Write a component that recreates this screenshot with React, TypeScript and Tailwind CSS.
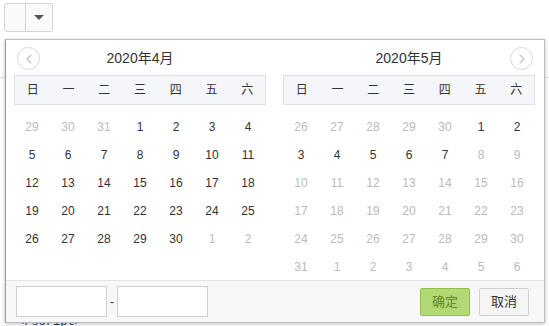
import { ChevronLeft, ChevronRight } from 'lucide-react'

const weekDays = ['日', '一', '二', '三', '四', '五', '六']

type Day = { n: number; muted: boolean }

const april: Day[] = [
  ...[29, 30, 31].map((n) => ({ n, muted: true })),
  ...Array.from({ length: 30 }, (_, i) => ({ n: i + 1, muted: false })),
  ...[1, 2].map((n) => ({ n, muted: true })),
]

const may: Day[] = [
  ...[26, 27, 28, 29, 30].map((n) => ({ n, muted: true })),
  ...Array.from({ length: 31 }, (_, i) => ({ n: i + 1, muted: i > 6 })),
  ...[1, 2, 3, 4, 5, 6].map((n) => ({ n, muted: true })),
]

function NavButton({ dir }: { dir: 'prev' | 'next' }) {
  const Icon = dir === 'prev' ? ChevronLeft : ChevronRight
  return (
    <button className="flex h-[23px] w-[23px] items-center justify-center rounded-full border border-[#d9d9d9] bg-white text-[#c4c4c4]">
      <Icon size={16} strokeWidth={1.75} />
    </button>
  )
}

function Month({ title, days, nav }: { title: string; days: Day[]; nav: 'prev' | 'next' }) {
  return (
    <div className="flex w-[252px] flex-col">
      <div className="relative flex h-[35px] items-center justify-center">
        <div className={nav === 'prev' ? 'absolute left-[3px] top-[7px]' : 'absolute right-[2px] top-[7px]'}>
          <NavButton dir={nav} />
        </div>
        <span className="pt-[2px] text-[14px] text-[#333]">{title}</span>
      </div>
      <div className="grid h-[30px] grid-cols-7 items-center border border-[#dfe1e4] bg-[#f4f6f9]">
        {weekDays.map((w) => (
          <span key={w} className="text-center text-[12px] text-[#333]">
            {w}
          </span>
        ))}
      </div>
      <div className="mt-[8px] grid grid-cols-7">
        {days.map((d, i) => (
          <span
            key={i}
            className={
              'flex h-[28px] items-center justify-center text-[12px] ' +
              (d.muted ? 'text-[#bbbbbb]' : 'text-[#333]')
            }
          >
            {d.n}
          </span>
        ))}
      </div>
    </div>
  )
}

export default function App() {
  return (
    <div
      className="relative h-[326px] w-[549px] overflow-hidden bg-white"
      style={{ fontFamily: '"Liberation Sans", "Noto Sans CJK SC", sans-serif' }}
    >
      <div className="ml-[4px] mt-[3px] flex h-[29px] w-[49px] rounded-[3px] border border-[#d4d4d4] bg-[#fafafa]">
        <div className="w-[21px] border-r border-[#d4d4d4]" />
        <div className="flex flex-1 items-center justify-center">
          <span className="h-0 w-0 border-x-[5px] border-t-[5px] border-x-transparent border-t-[#555]" />
        </div>
      </div>
      <div className="mt-[45px] h-px w-full bg-[#e2e2e2]" />
      <div className="absolute left-[17px] top-[313px] font-['Liberation_Mono'] text-[12px] text-[#1c3f78]">
        &lt;/script&gt;
      </div>

      <div className="absolute left-[5px] top-[39px] flex w-[540px] flex-col border border-[#bdbdbd] border-l-[#999] bg-white shadow-[0_1px_4px_rgba(0,0,0,0.25)]">
        <div className="flex gap-[17px] pl-[8px]">
          <Month title="2020年4月" days={april} nav="prev" />
          <Month title="2020年5月" days={may} nav="next" />
        </div>
        <div className="mt-[-1px] flex h-[42px] items-center border-t border-[#e5e5e5] bg-[#f8f8f8] pl-[10px] pr-[15px]">
          <input className="h-[31px] w-[91px] border border-[#cfcfcf] bg-white" />
          <span className="mx-[3px] text-[12px] text-[#333]">-</span>
          <input className="h-[31px] w-[91px] border border-[#cfcfcf] bg-white" />
          <div className="ml-auto flex gap-[9px]">
            <button className="h-[28px] w-[50px] rounded-[2px] border border-[#90bf4d] bg-[#b3d874] text-[13px] text-[#5b8a26]">
              确定
            </button>
            <button className="h-[28px] w-[50px] rounded-[2px] border border-[#cfcfcf] bg-[#f5f5f5] text-[13px] text-[#333]">
              取消
            </button>
          </div>
        </div>
      </div>
    </div>
  )
}
